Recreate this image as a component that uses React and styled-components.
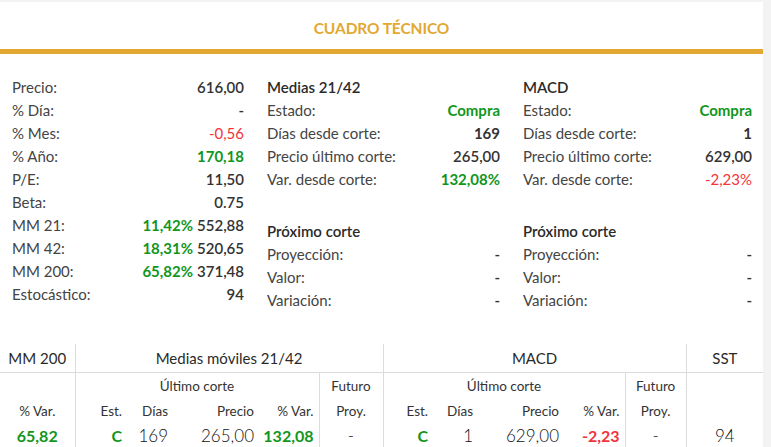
import React from 'react';
import styled, { createGlobalStyle } from 'styled-components';

const GlobalStyle = createGlobalStyle`
  html, body {
    margin: 0;
    padding: 0;
    background: #f3f3f3;
  }
  body {
    font-family: Lato, "Open Sans", sans-serif;
    color: #333;
  }
`;

const GREEN = '#11961c';
const RED = '#f2343a';

const Card = styled.div`
  width: 763px;
  margin-top: 2px;
  background: #fff;
  height: 445px;
  overflow: hidden;
`;

const Header = styled.div`
  height: 47px;
  display: flex;
  align-items: center;
  justify-content: center;
  border-bottom: 5px solid #e2a832;
`;

const Title = styled.h2`
  margin: 0;
  padding-top: 4px;
  font-size: 15.5px;
  font-weight: 700;
  color: #e2a832;
  letter-spacing: -0.1px;
  text-transform: uppercase;
`;

const Summary = styled.div`
  display: grid;
  grid-template-columns: 255px 256px 252px;
  padding-top: 22px;
`;

const Column = styled.div`
  padding: 0 11px 0 12px;
`;

const Heading = styled.div`
  font-size: 15px;
  font-weight: 600;
  line-height: 23px;
  color: #2a2a2a;
  margin-top: ${p => (p.$spaced ? '29px' : '0')};
`;

const Row = styled.div`
  display: flex;
  justify-content: space-between;
  align-items: baseline;
  font-size: 15px;
  line-height: 23px;
`;

const Label = styled.span`
  color: #444;
`;

const Value = styled.span`
  color: ${p => (p.$tone === 'up' ? GREEN : p.$tone === 'down' ? RED : '#333')};
  font-weight: ${p => (p.$strong ? 700 : p.$tone === 'down' ? 400 : 600)};
`;

const Pct = styled.span`
  color: ${GREEN};
  font-weight: 700;
  margin-right: 4px;
`;

const Table = styled.table`
  width: 763px;
  margin-top: 32px;
  border-collapse: collapse;
  table-layout: fixed;
`;

const GroupCell = styled.th`
  height: 28px;
  padding: 0;
  font-size: 15px;
  font-weight: 400;
  color: #2a2a2a;
  text-align: center;
  border-left: ${p => (p.$first ? 'none' : '1px solid #dcdcdc')};
  border-bottom: 1px solid #dcdcdc;
`;

const SubCell = styled.th`
  height: 25px;
  padding: 0 5px 0 0;
  font-size: 13.5px;
  font-weight: 400;
  color: #333;
  text-align: ${p => (p.$center ? 'center' : 'right')};
  border-left: ${p => (p.$line ? '1px solid #dcdcdc' : 'none')};
  ${p => p.$center && 'padding: 0;'}
`;

const DataCell = styled.td`
  height: 25px;
  padding: 0 5px 0 0;
  font-size: ${p => (p.$tone ? '16px' : '17px')};
  font-weight: ${p => (p.$tone ? 700 : 300)};
  color: ${p => (p.$tone === 'up' ? GREEN : p.$tone === 'down' ? RED : '#111')};
  text-align: ${p => (p.$center ? 'center' : 'right')};
  border-left: ${p => (p.$line ? '1px solid #dcdcdc' : 'none')};
  ${p => p.$center && 'padding: 0;'}
`;

const general = [
  ['Precio:', '616,00'],
  ['% Día:', '-'],
  ['% Mes:', '-0,56', 'down'],
  ['% Año:', '170,18', 'up'],
  ['P/E:', '11,50'],
  ['Beta:', '0.75'],
  ['MM 21:', '552,88', null, '11,42%'],
  ['MM 42:', '520,65', null, '18,31%'],
  ['MM 200:', '371,48', null, '65,82%'],
  ['Estocástico:', '94'],
];

const indicators = [
  { name: 'Medias 21/42', dias: '169', precio: '265,00', varCorte: '132,08%', tone: 'up' },
  { name: 'MACD', dias: '1', precio: '629,00', varCorte: '-2,23%', tone: 'down' },
];

const widths = [75, 52, 46, 86, 60, 64, 50, 45, 86, 61, 61, 77];

const Indicator = ({ data }) => (
  <Column>
    <Heading>{data.name}</Heading>
    <Row><Label>Estado:</Label><Value $tone="up" $strong>Compra</Value></Row>
    <Row><Label>Días desde corte:</Label><Value $strong>{data.dias}</Value></Row>
    <Row><Label>Precio último corte:</Label><Value>{data.precio}</Value></Row>
    <Row><Label>Var. desde corte:</Label><Value $tone={data.tone} $strong={data.tone === 'up'}>{data.varCorte}</Value></Row>
    <Heading $spaced>Próximo corte</Heading>
    <Row><Label>Proyección:</Label><Value>-</Value></Row>
    <Row><Label>Valor:</Label><Value>-</Value></Row>
    <Row><Label>Variación:</Label><Value>-</Value></Row>
  </Column>
);

export default function App() {
  return (
    <>
      <GlobalStyle />
      <Card>
        <Header>
          <Title>Cuadro Técnico</Title>
        </Header>

        <Summary>
          <Column>
            {general.map(([label, value, tone, pct]) => (
              <Row key={label}>
                <Label>{label}</Label>
                <span>
                  {pct && <Pct>{pct}</Pct>}
                  <Value $tone={tone} $strong={tone === 'up'}>{value}</Value>
                </span>
              </Row>
            ))}
          </Column>
          {indicators.map(ind => (
            <Indicator key={ind.name} data={ind} />
          ))}
        </Summary>

        <Table>
          <colgroup>
            {widths.map((w, i) => (
              <col key={i} style={{ width: w }} />
            ))}
          </colgroup>
          <thead>
            <tr>
              <GroupCell $first>MM 200</GroupCell>
              <GroupCell colSpan={5}>Medias móviles 21/42</GroupCell>
              <GroupCell colSpan={5}>MACD</GroupCell>
              <GroupCell>SST</GroupCell>
            </tr>
            <tr>
              <SubCell $center />
              <SubCell $center $line colSpan={4}>Último corte</SubCell>
              <SubCell $center $line>Futuro</SubCell>
              <SubCell $center $line colSpan={4}>Último corte</SubCell>
              <SubCell $center $line>Futuro</SubCell>
              <SubCell $center $line />
            </tr>
            <tr>
              <SubCell $center>% Var.</SubCell>
              <SubCell $line>Est.</SubCell>
              <SubCell>Días</SubCell>
              <SubCell>Precio</SubCell>
              <SubCell>% Var.</SubCell>
              <SubCell $center $line>Proy.</SubCell>
              <SubCell $line>Est.</SubCell>
              <SubCell>Días</SubCell>
              <SubCell>Precio</SubCell>
              <SubCell>% Var.</SubCell>
              <SubCell $center $line>Proy.</SubCell>
              <SubCell $center $line />
            </tr>
          </thead>
          <tbody>
            <tr>
              <DataCell $center $tone="up">65,82</DataCell>
              <DataCell $line $tone="up">C</DataCell>
              <DataCell>169</DataCell>
              <DataCell>265,00</DataCell>
              <DataCell $tone="up">132,08</DataCell>
              <DataCell $center $line>-</DataCell>
              <DataCell $line $tone="up">C</DataCell>
              <DataCell>1</DataCell>
              <DataCell>629,00</DataCell>
              <DataCell $tone="down">-2,23</DataCell>
              <DataCell $center $line>-</DataCell>
              <DataCell $center $line>94</DataCell>
            </tr>
          </tbody>
        </Table>
      </Card>
    </>
  );
}
